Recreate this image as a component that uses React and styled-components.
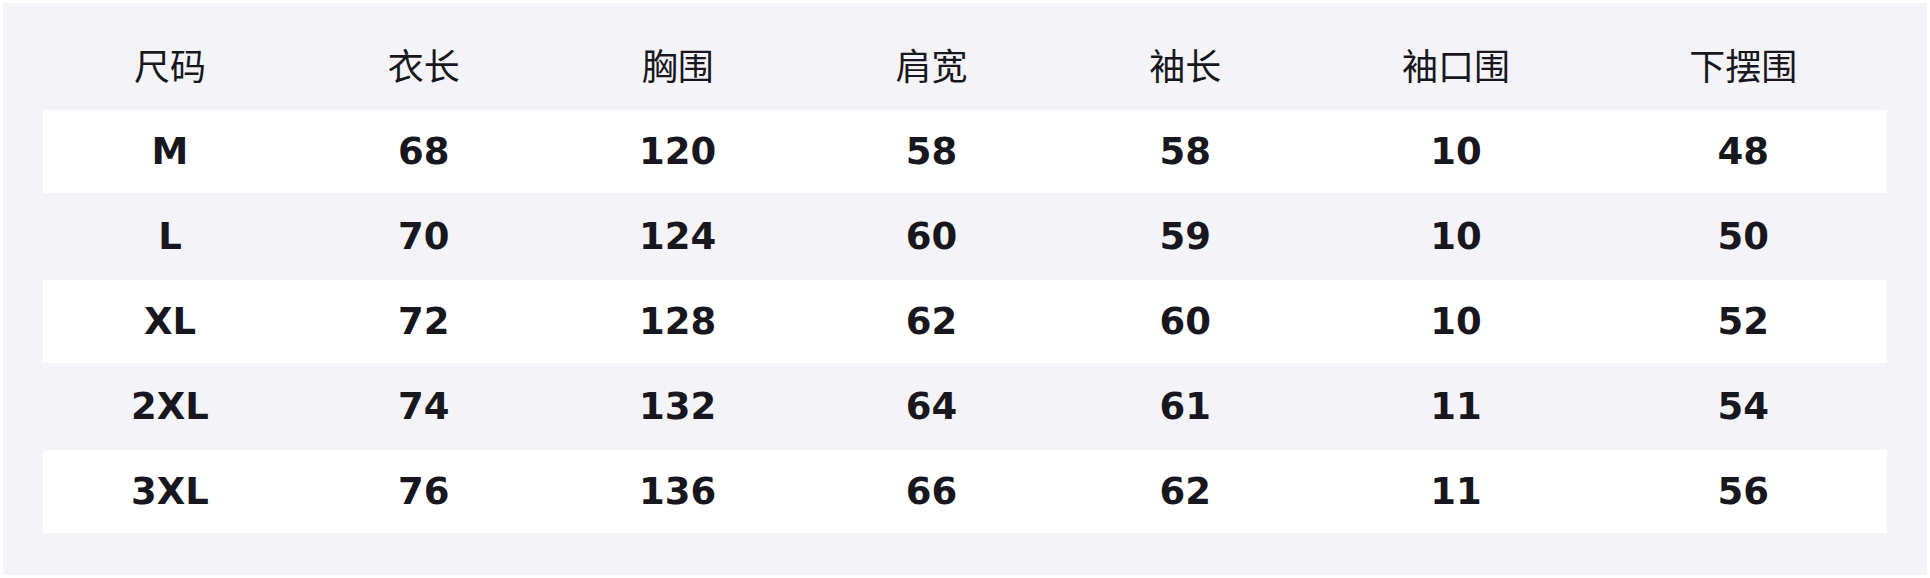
import styled, { createGlobalStyle } from 'styled-components'

const GlobalStyle = createGlobalStyle`
    body {
        margin: 0;
        background: #ffffff;
    }
`

const Page = styled.div`
    padding: 3px;
`

const Panel = styled.div`
    background: #f3f3f8;
    padding: 42px 40px;
    display: flex;
    flex-direction: column;
    gap: 2px;
`

const cols = 'repeat(5, minmax(0, 254fr)) repeat(2, minmax(0, 287.5fr))'

const HeadRow = styled.div`
    display: grid;
    grid-template-columns: ${cols};
    height: 63px;
`

const HeadCell = styled.div`
    text-align: center;
    font-family: "Noto Sans CJK SC", "DejaVu Sans", sans-serif;
    font-size: 36px;
    line-height: 38px;
    color: #17171d;
`

const Row = styled.div`
    display: grid;
    grid-template-columns: ${cols};
    height: 83px;
    background: ${p => (p.$light ? '#ffffff' : 'transparent')};
`

const Cell = styled.div`
    display: flex;
    justify-content: center;
    align-items: center;
    font-family: "DejaVu Sans", "Noto Sans CJK SC", sans-serif;
    font-weight: bold;
    font-size: 37px;
    color: #17171d;
`

const heads = ['尺码', '衣长', '胸围', '肩宽', '袖长', '袖口围', '下摆围']

const sizes = [
    ['M', 68, 120, 58, 58, 10, 48],
    ['L', 70, 124, 60, 59, 10, 50],
    ['XL', 72, 128, 62, 60, 10, 52],
    ['2XL', 74, 132, 64, 61, 11, 54],
    ['3XL', 76, 136, 66, 62, 11, 56],
]

export default function App() {
    return (
        <Page>
            <GlobalStyle />
            <Panel>
                <HeadRow>
                    {heads.map(h => <HeadCell key={h}>{h}</HeadCell>)}
                </HeadRow>
                {sizes.map((r, i) => (
                    <Row key={r[0]} $light={i % 2 === 0}>
                        {r.map((v, j) => <Cell key={j}>{v}</Cell>)}
                    </Row>
                ))}
            </Panel>
        </Page>
    )
}
